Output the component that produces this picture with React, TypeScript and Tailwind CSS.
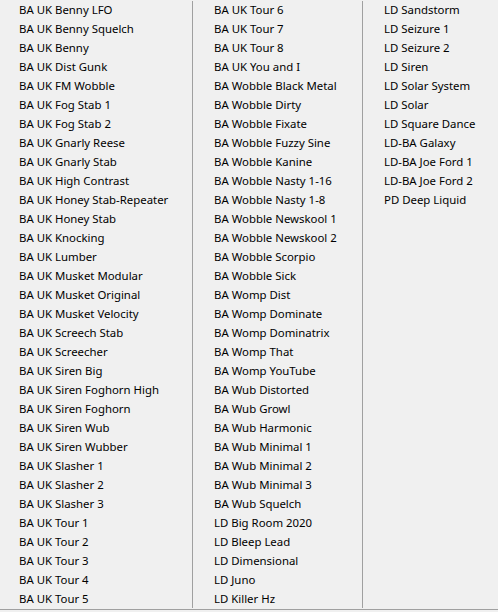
import React from "react";

const col1 = [
  "BA UK Benny LFO",
  "BA UK Benny Squelch",
  "BA UK Benny",
  "BA UK Dist Gunk",
  "BA UK FM Wobble",
  "BA UK Fog Stab 1",
  "BA UK Fog Stab 2",
  "BA UK Gnarly Reese",
  "BA UK Gnarly Stab",
  "BA UK High Contrast",
  "BA UK Honey Stab-Repeater",
  "BA UK Honey Stab",
  "BA UK Knocking",
  "BA UK Lumber",
  "BA UK Musket Modular",
  "BA UK Musket Original",
  "BA UK Musket Velocity",
  "BA UK Screech Stab",
  "BA UK Screecher",
  "BA UK Siren Big",
  "BA UK Siren Foghorn High",
  "BA UK Siren Foghorn",
  "BA UK Siren Wub",
  "BA UK Siren Wubber",
  "BA UK Slasher 1",
  "BA UK Slasher 2",
  "BA UK Slasher 3",
  "BA UK Tour 1",
  "BA UK Tour 2",
  "BA UK Tour 3",
  "BA UK Tour 4",
  "BA UK Tour 5",
];

const col2 = [
  "BA UK Tour 6",
  "BA UK Tour 7",
  "BA UK Tour 8",
  "BA UK You and I",
  "BA Wobble Black Metal",
  "BA Wobble Dirty",
  "BA Wobble Fixate",
  "BA Wobble Fuzzy Sine",
  "BA Wobble Kanine",
  "BA Wobble Nasty 1-16",
  "BA Wobble Nasty 1-8",
  "BA Wobble Newskool 1",
  "BA Wobble Newskool 2",
  "BA Wobble Scorpio",
  "BA Wobble Sick",
  "BA Womp Dist",
  "BA Womp Dominate",
  "BA Womp Dominatrix",
  "BA Womp That",
  "BA Womp YouTube",
  "BA Wub Distorted",
  "BA Wub Growl",
  "BA Wub Harmonic",
  "BA Wub Minimal 1",
  "BA Wub Minimal 2",
  "BA Wub Minimal 3",
  "BA Wub Squelch",
  "LD Big Room 2020",
  "LD Bleep Lead",
  "LD Dimensional",
  "LD Juno",
  "LD Killer Hz",
];

const col3 = [
  "LD Sandstorm",
  "LD Seizure 1",
  "LD Seizure 2",
  "LD Siren",
  "LD Solar System",
  "LD Solar",
  "LD Square Dance",
  "LD-BA Galaxy",
  "LD-BA Joe Ford 1",
  "LD-BA Joe Ford 2",
  "PD Deep Liquid",
];

function Column({ items, className }: { items: string[]; className: string }) {
  return (
    <div className={className}>
      {items.map((t) => (
        <div key={t} className="h-[19px] leading-[19px] whitespace-nowrap">
          {t}
        </div>
      ))}
    </div>
  );
}

export default function App() {
  return (
    <div
      className="w-[498px] h-[612px] bg-[#f0f0f0] text-[11.4px] text-black overflow-hidden flex flex-col"
      style={{ fontFamily: '"Noto Sans", "Open Sans", sans-serif' }}
    >
      <div className="flex h-[610px] border-b border-[#a0a0a0]">
        <div className="w-[193px] flex">
          <Column items={col1} className="flex-1 pl-[19px]" />
          <div className="w-px bg-[#a0a0a0] mt-[1px] mb-[1px]" />
        </div>
        <div className="w-[170px] flex">
          <Column items={col2} className="flex-1 pl-[21px]" />
          <div className="w-px bg-[#a0a0a0] mt-[1px] mb-[1px]" />
        </div>
        <Column items={col3} className="flex-1 pl-[21px]" />
      </div>
    </div>
  );
}
